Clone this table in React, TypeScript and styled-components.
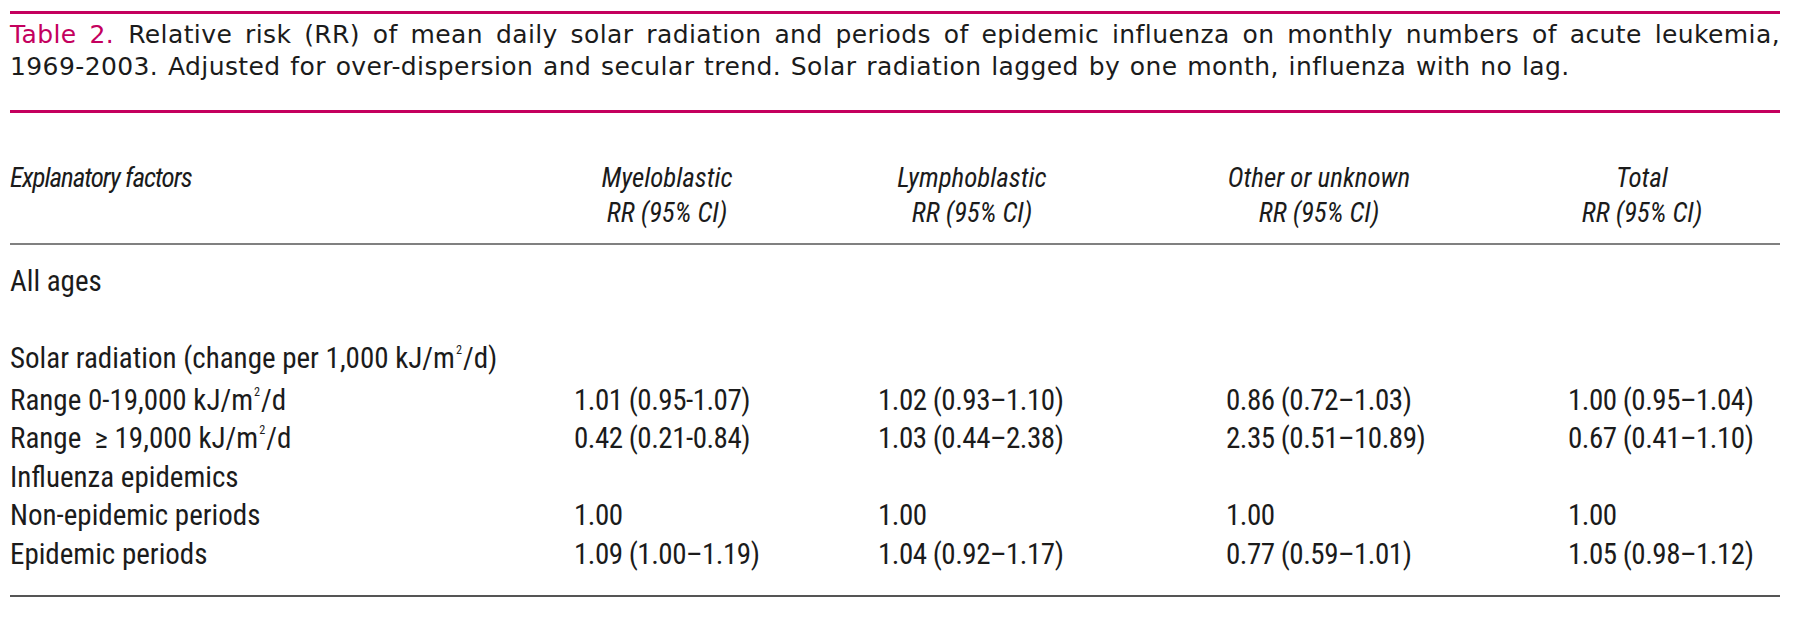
import styled, { createGlobalStyle } from 'styled-components';

const GlobalStyle = createGlobalStyle`
	html, body {
		margin: 0;
		padding: 0;
		background: #ffffff;
	}
`;

const Page = styled.div`
	width: 1770px;
	padding: 11px 20px 0 10px;
	color: #1b1b1b;
`;

const Rule = styled.div<{ $tone: 'mid' | 'dark' }>`
	height: 2px;
	background: ${({ $tone }) => ($tone === 'mid' ? '#808080' : '#555555')};
`;

const Caption = styled.div`
	border-top: 3px solid #c4005e;
	border-bottom: 3px solid #c4005e;
	font-family: 'DejaVu Sans', 'Liberation Sans', sans-serif;
	font-size: 25px;
	letter-spacing: 0.4px;
	line-height: 32px;
	padding: 5px 0 27px;
`;

const CaptionLine = styled.div<{ $spread?: boolean }>`
	text-align: ${({ $spread }) => ($spread ? 'justify' : 'left')};
	text-align-last: ${({ $spread }) => ($spread ? 'justify' : 'left')};
	word-spacing: ${({ $spread }) => ($spread ? '0' : '1.4px')};
	white-space: nowrap;
`;

const Label = styled.span`
	color: #c4005e;
	margin-right: 14px;
`;

const Grid = styled.div`
	display: grid;
	grid-template-columns: 564px 304px 348px 342px 1fr;
	font-family: 'Roboto Condensed', 'DejaVu Sans Condensed', 'Liberation Sans', sans-serif;
`;

const Head = styled(Grid)`
	font-size: 27px;
	font-style: italic;
	line-height: 35px;
	padding: 48px 0 12px;
`;

const HeadCell = styled.div<{ $w?: number }>`
	width: ${({ $w }) => ($w ? `${$w}px` : 'auto')};
	text-align: ${({ $w }) => ($w ? 'center' : 'left')};
	letter-spacing: ${({ $w }) => ($w ? '0' : '-1px')};
	display: flex;
	flex-direction: column;
	white-space: nowrap;
`;

const Body = styled.div`
	padding: 17px 0 22px;
`;

const Row = styled(Grid)<{ $after?: number }>`
	font-size: 29px;
	line-height: 38.5px;
	margin-bottom: ${({ $after }) => $after ?? 0}px;
`;

const Cell = styled.div`
	white-space: nowrap;
`;

const Value = styled(Cell)`
	letter-spacing: -0.5px;
`;

const Sup = styled.sup`
	font-size: 0.42em;
	vertical-align: 1.15em;
	line-height: 0;
	margin: 0 1px;
`;

const unit = (
	<>
		kJ/m<Sup>2</Sup>/d
	</>
);

type Line = { label: React.ReactNode; values?: string[]; after?: number };

const lines: Line[] = [
	{ label: 'All ages', after: 38.5 },
	{ label: <>Solar radiation (change per 1,000 {unit})</>, after: 3 },
	{
		label: <>Range 0-19,000 {unit}</>,
		values: ['1.01 (0.95-1.07)', '1.02 (0.93–1.10)', '0.86 (0.72–1.03)', '1.00 (0.95–1.04)'],
	},
	{
		label: <>Range&nbsp; ≥ 19,000 {unit}</>,
		values: ['0.42 (0.21-0.84)', '1.03 (0.44–2.38)', '2.35 (0.51–10.89)', '0.67 (0.41–1.10)'],
	},
	{ label: 'Influenza epidemics' },
	{ label: 'Non-epidemic periods', values: ['1.00', '1.00', '1.00', '1.00'] },
	{
		label: 'Epidemic periods',
		values: ['1.09 (1.00–1.19)', '1.04 (0.92–1.17)', '0.77 (0.59–1.01)', '1.05 (0.98–1.12)'],
	},
];

const groups: [string, number][] = [
	['Myeloblastic', 186],
	['Lymphoblastic', 188],
	['Other or unknown', 186],
	['Total', 148],
];

const App = () => {
	return (
		<>
			<GlobalStyle />
			<Page>
				<Caption>
					<CaptionLine $spread>
						<Label>Table 2.</Label>
						Relative risk (RR) of mean daily solar radiation and periods of epidemic influenza on monthly numbers of acute leukemia,
					</CaptionLine>
					<CaptionLine>
						1969-2003. Adjusted for over-dispersion and secular trend. Solar radiation lagged by one month, influenza with no lag.
					</CaptionLine>
				</Caption>
				<Head>
					<HeadCell>Explanatory factors</HeadCell>
					{groups.map(([g, w]) => (
						<HeadCell key={g} $w={w}>
							<span>{g}</span>
							<span>RR (95% CI)</span>
						</HeadCell>
					))}
				</Head>
				<Rule $tone="mid" />
				<Body>
					{lines.map((l, i) => (
						<Row key={i} $after={l.after}>
							<Cell>{l.label}</Cell>
							{(l.values ?? ['', '', '', '']).map((v, j) => (
								<Value key={j}>{v}</Value>
							))}
						</Row>
					))}
				</Body>
				<Rule $tone="dark" />
			</Page>
		</>
	);
};

export default App;
